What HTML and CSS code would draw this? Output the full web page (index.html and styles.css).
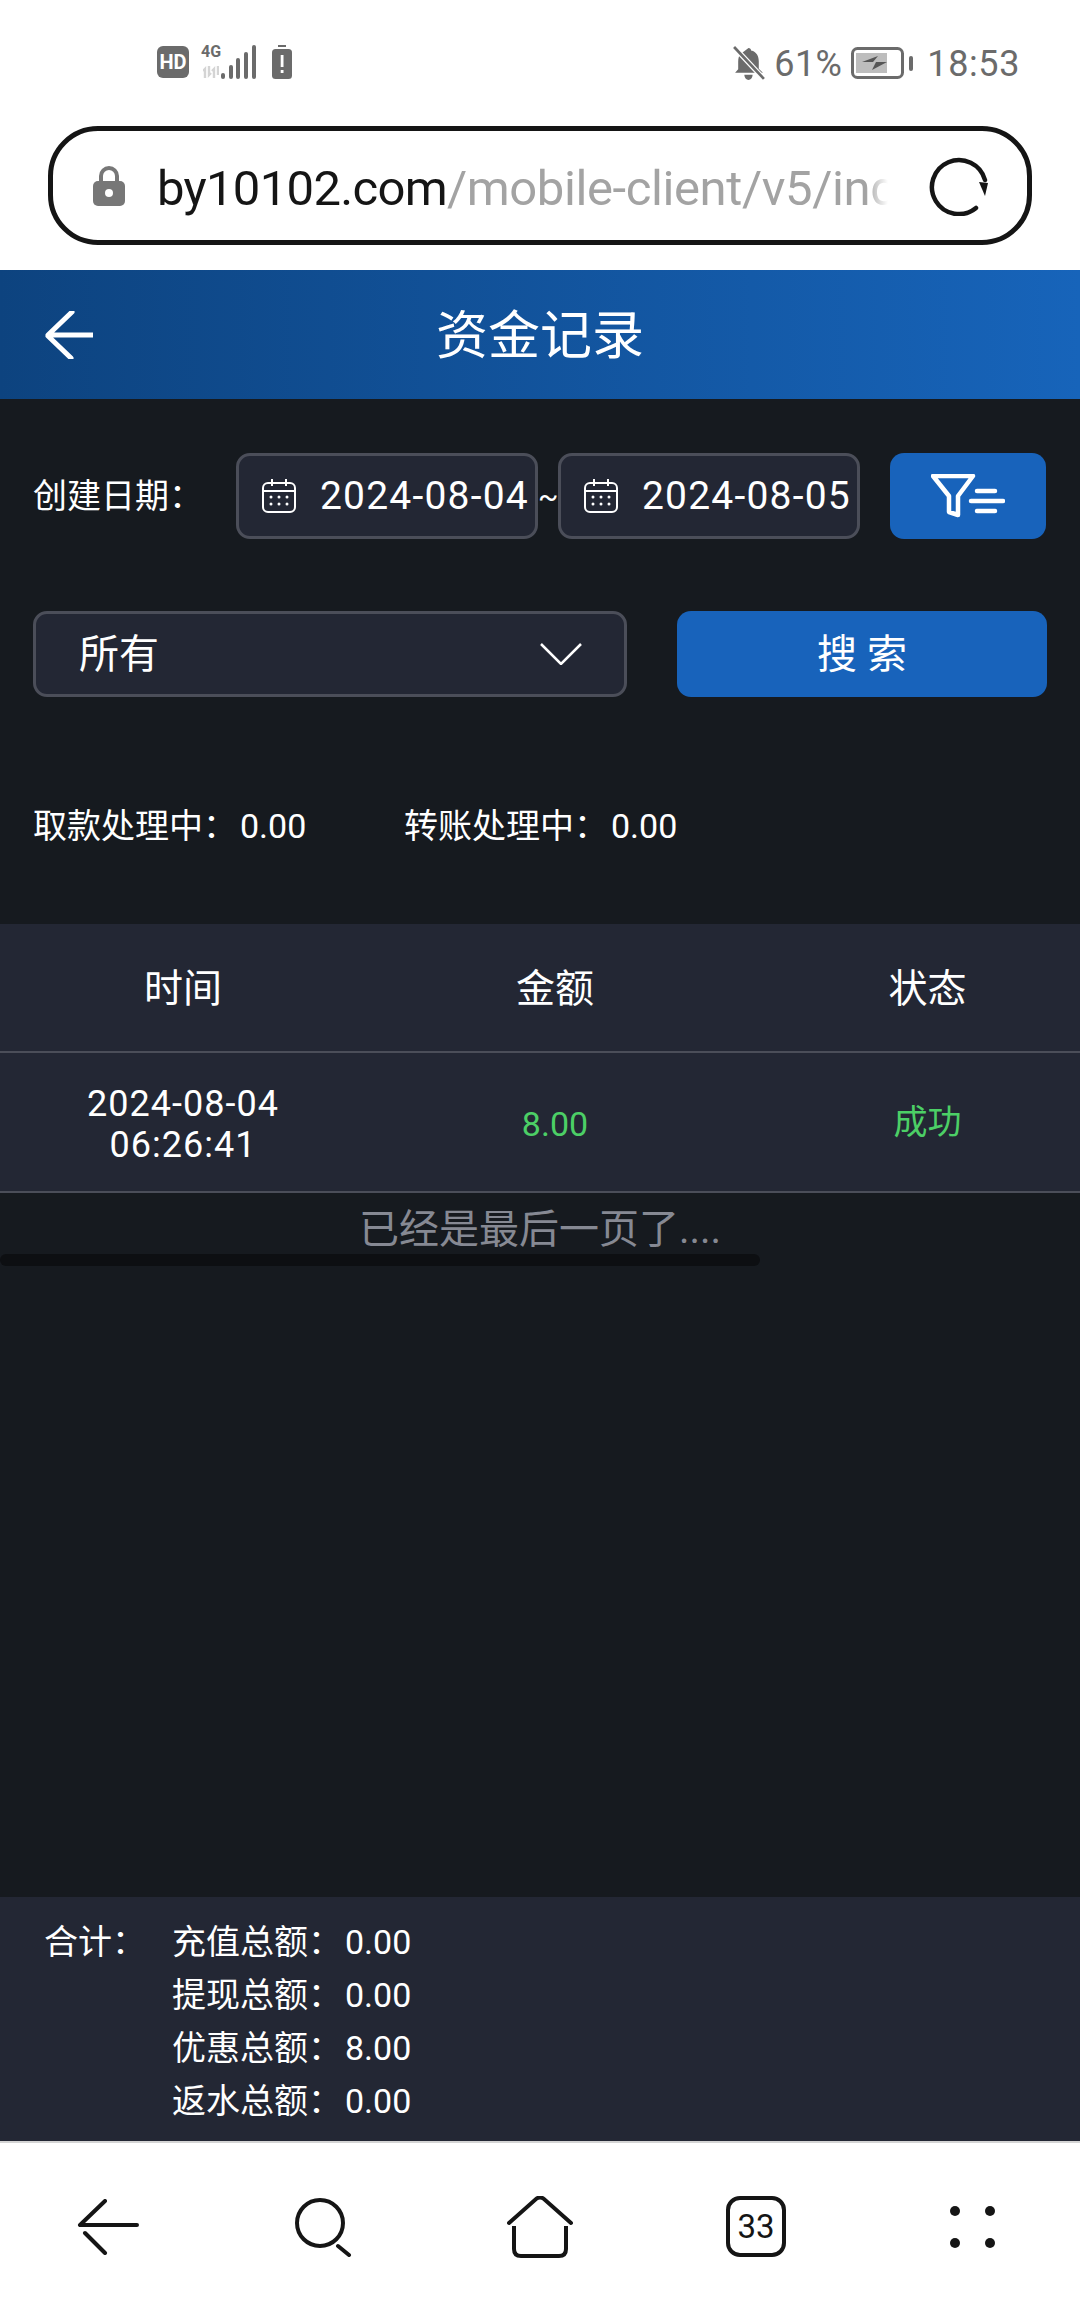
FILE: index.html
```html
<!DOCTYPE html>
<html lang="zh-CN">
<head>
    <meta charset="UTF-8">
    <meta name="viewport" content="width=device-width, initial-scale=1.0">
    <title>资金记录</title>
    <link rel="stylesheet" href="styles.css">
</head>
<body>
    <div class="status">
        <div class="status-left">
            <span class="hd">HD</span>
            <div class="net">
                <span class="net-label">4G</span>
                <svg class="net-arrows" width="16" height="12" viewBox="0 0 16 12"><path d="M2 12V3L0 5M6 0v9l2-2M11 12V3L9 5M15 0v9" fill="none" stroke="#d4d4d4" stroke-width="2.4"/></svg>
                <svg class="net-bars" width="35" height="34" viewBox="0 0 35 34"><g fill="#6b6b6b"><rect x="0" y="28" width="4" height="6" rx="2"/><rect x="8" y="20" width="4" height="14" rx="2"/><rect x="15" y="13" width="4" height="21" rx="2"/><rect x="23" y="7" width="4" height="27" rx="2"/><rect x="31" y="0" width="4" height="34" rx="2"/></g></svg>
            </div>
            <svg class="alert" width="20" height="34" viewBox="0 0 20 34"><rect x="6" y="0" width="8" height="2" fill="#6b6b6b"/><rect x="0" y="4" width="20" height="30" rx="3.500" fill="#6b6b6b"/><rect x="8.700" y="10" width="2.800" height="12" fill="#fff"/><rect x="8.700" y="25" width="2.800" height="3" fill="#fff"/></svg>
        </div>
        <div class="status-right">
            <svg width="32" height="35" viewBox="0 0 31 34"><path d="M15 2c1.500 0 2.500 1 2.500 2.300C23 5.500 25 10 25 15v7l4 4H2l3-3.500V15c0-3 .8-5.500 2-7z" fill="#6b6b6b"/><path d="M11 28h8c0 3-2 5-4 5s-4-2-4-5z" fill="#6b6b6b"/><path d="M1 1l29 31" stroke="#fff" stroke-width="5"/><path d="M1 1l29 31" stroke="#6b6b6b" stroke-width="2.600"/></svg>
            <span class="pct">61%</span>
            <svg width="62" height="32" viewBox="0 0 62 32"><rect x="1.500" y="1.500" width="50" height="29" rx="5" fill="none" stroke="#6b6b6b" stroke-width="3"/><rect x="5" y="6" width="31" height="20" fill="#bdbdbd"/><path d="M11 15l16-6-5 6h14l-15 8 4-8z" fill="#555"/><rect x="58" y="9" width="4" height="15" rx="2" fill="#6b6b6b"/></svg>
            <span class="clock">18:53</span>
        </div>
    </div>

    <div class="urlbar">
        <svg class="lock" width="32" height="40" viewBox="0 0 32 40"><path d="M8 16V10a8 8 0 0 1 16 0v6" fill="none" stroke="#777" stroke-width="4"/><rect x="0" y="15" width="32" height="25" rx="5" fill="#777"/><circle cx="16" cy="27" r="4" fill="#fff"/></svg>
        <div class="url"><span class="host">by10102.com</span>/mobile-client/v5/index.html</div>
        <svg class="reload" width="60" height="60" viewBox="0 0 60 60"><path d="M47 52A27 27 0 1 1 56 24" fill="none" stroke="#151515" stroke-width="4.500" stroke-linecap="round"/><path d="M50 26l9 1-3 13z" fill="#151515"/></svg>
    </div>

    <header class="topbar">
        <svg class="back" width="48" height="48" viewBox="0 0 48 48"><path d="M27 1L3 24h45M3 25l23 22" fill="none" stroke="#fff" stroke-width="5" stroke-linecap="round" stroke-linejoin="round"/></svg>
        <h1>资金记录</h1>
    </header>

    <main class="content">
        <div class="filters">
            <label class="date-label">创建日期：</label>
            <div class="date-box">
                <svg width="34" height="34" viewBox="0 0 34 34"><g fill="none" stroke="#fff" stroke-width="2"><rect x="1" y="4" width="32" height="29" rx="5"/><path d="M1 12h32M10 0v7M24 0v7"/></g><g fill="#fff"><circle cx="9" cy="18" r="1.500"/><circle cx="17" cy="18" r="1.500"/><circle cx="25" cy="18" r="1.500"/><circle cx="9" cy="25" r="1.500"/><circle cx="17" cy="25" r="1.500"/><circle cx="25" cy="25" r="1.500"/></g></svg>
                <span>2024-08-04</span>
            </div>
            <span class="tilde">~</span>
            <div class="date-box">
                <svg width="34" height="34" viewBox="0 0 34 34"><g fill="none" stroke="#fff" stroke-width="2"><rect x="1" y="4" width="32" height="29" rx="5"/><path d="M1 12h32M10 0v7M24 0v7"/></g><g fill="#fff"><circle cx="9" cy="18" r="1.500"/><circle cx="17" cy="18" r="1.500"/><circle cx="25" cy="18" r="1.500"/><circle cx="9" cy="25" r="1.500"/><circle cx="17" cy="25" r="1.500"/><circle cx="25" cy="25" r="1.500"/></g></svg>
                <span>2024-08-05</span>
            </div>
            <button class="btn btn-filter">
                <svg width="74" height="44" viewBox="0 0 74 44"><path d="M2 2h40L27 22v19l-9 -3V22z" fill="none" stroke="#fff" stroke-width="4.500" stroke-linejoin="round"/><path d="M46 17h18M40 27h32M46 37h18" stroke="#fff" stroke-width="4.500" stroke-linecap="round"/></svg>
            </button>
        </div>

        <div class="filters second">
            <div class="select">
                <span class="select-text">所有</span>
                <svg width="42" height="22" viewBox="0 0 42 22"><path d="M1 1l20 20L41 1" fill="none" stroke="#fff" stroke-width="2.500"/></svg>
            </div>
            <button class="btn btn-search">搜 索</button>
        </div>

        <div class="pending">
            <span class="pending-item">取款处理中：<b>0.00</b></span>
            <span class="pending-item">转账处理中：<b>0.00</b></span>
        </div>

        <div class="table">
            <div class="row head">
                <div>时间</div>
                <div>金额</div>
                <div>状态</div>
            </div>
            <div class="row">
                <div class="cell-time">2024-08-04<br>06:26:41</div>
                <div class="ok cell-num">8.00</div>
                <div class="ok cell-cjk">成功</div>
            </div>
        </div>

        <div class="pager">已经是最后一页了....</div>
        <div class="scroll-thumb"></div>
    </main>

    <footer class="totals">
        <span class="totals-title">合计：</span>
        <div class="totals-list">
            <div>充值总额：<b>0.00</b></div>
            <div>提现总额：<b>0.00</b></div>
            <div>优惠总额：<b>8.00</b></div>
            <div>返水总额：<b>0.00</b></div>
        </div>
    </footer>

    <nav class="bottom-nav">
        <div class="nav-item">
            <svg width="62" height="56" viewBox="0 0 62 56"><path d="M28 2L3 26h57" fill="none" stroke="#151515" stroke-width="4" stroke-linecap="round" stroke-linejoin="round"/><path d="M8 34l20 20" stroke="#151515" stroke-width="4" stroke-linecap="round"/></svg>
        </div>
        <div class="nav-item">
            <svg width="58" height="60" viewBox="0 0 58 60"><circle cx="25" cy="26" r="23" fill="none" stroke="#151515" stroke-width="4"/><path d="M43 49l11 9" stroke="#151515" stroke-width="4" stroke-linecap="round"/></svg>
        </div>
        <div class="nav-item">
            <svg width="66" height="62" viewBox="0 0 66 62"><path d="M2 27L29 3q4-3 8 0l27 24" fill="none" stroke="#151515" stroke-width="4" stroke-linecap="round"/><path d="M7 30v23q0 7 7 7h38q7 0 7-7V30" fill="none" stroke="#151515" stroke-width="4"/></svg>
        </div>
        <div class="nav-item"><span class="tabs">33</span></div>
        <div class="nav-item">
            <div class="dots"><i></i><i></i><i></i><i></i></div>
        </div>
    </nav>
</body>
</html>
```

FILE: styles.css
```css
* {
    box-sizing: border-box;
}
body {
    margin: 0;
    width: 1080px;
    height: 2310px;
    display: flex;
    flex-direction: column;
    overflow: hidden;
    background: #fff;
    font-family: Roboto, "Noto Sans CJK SC", sans-serif;
    color: #fff;
}

/* phone status bar */
.status {
    height: 126px;
    flex: none;
    display: flex;
    justify-content: space-between;
    align-items: flex-start;
    padding: 45px 60px 0 157px;
    color: #6b6b6b;
}
.status-left, .status-right {
    display: flex;
    align-items: center;
}
.status-left {
    gap: 12px;
}
.hd {
    width: 32px;
    height: 32px;
    background: #6b6b6b;
    border-radius: 6px;
    color: #fff;
    font-size: 20px;
    font-weight: 700;
    line-height: 32px;
    text-align: center;
}
.net {
    position: relative;
    width: 86px;
    height: 34px;
    margin-right: -27px;
}
.net-label {
    position: absolute;
    left: 0;
    top: -3px;
    font-size: 16px;
    font-weight: 700;
    color: #6b6b6b;
}
.net-arrows {
    position: absolute;
    left: 2px;
    top: 21px;
}
.net-bars {
    position: absolute;
    left: 20px;
    top: 0;
}
.pct, .clock {
    font-size: 36px;
    line-height: 34px;
    padding-top: 2px;
}
.pct {
    margin: 0 9px 0 9px;
    letter-spacing: .4px;
}
.clock {
    margin-left: 14px;
    letter-spacing: .6px;
}

/* browser address bar */
.urlbar {
    flex: none;
    width: 984px;
    height: 119px;
    margin: 0 0 25px 48px;
    border: 5px solid #151515;
    border-radius: 50px;
    display: flex;
    align-items: center;
    padding-left: 40px;
}
.lock {
    flex: none;
}
.url {
    width: 731px;
    margin-left: 32px;
    padding-top: 5px;
    overflow: hidden;
    white-space: nowrap;
    font-size: 49px;
    letter-spacing: -.4px;
    color: #a3a3a3;
    -webkit-mask-image: linear-gradient(to right, #000 97%, transparent);
}
.host {
    color: #151515;
    letter-spacing: -.7px;
}
.reload {
    flex: none;
    margin-left: 41px;
}

/* page header */
.topbar {
    flex: none;
    height: 129px;
    position: relative;
    display: flex;
    align-items: center;
    justify-content: center;
    padding-bottom: 6px;
    background: linear-gradient(to right, #0d437f, #1764ba);
}
.topbar h1 {
    margin: 0;
    font-size: 52px;
    font-weight: 400;
}
.back {
    position: absolute;
    left: 45px;
    top: 41px;
}

.content {
    flex: 1;
    min-height: 0;
    background: #161a1f;
    padding-top: 54px;
    overflow: hidden;
}
.filters {
    display: flex;
    align-items: center;
    height: 86px;
    padding: 0 33px;
}
.filters.second {
    margin-top: 72px;
}
.date-label {
    width: 203px;
    font-size: 34px;
    padding-bottom: 6px;
}
.date-box {
    width: 302px;
    height: 86px;
    display: flex;
    align-items: center;
    gap: 24px;
    padding-left: 23px;
    background: #232734;
    border: 3px solid #4b4e59;
    border-radius: 14px;
    font-size: 39px;
    letter-spacing: 1.2px;
    white-space: nowrap;
}
.tilde {
    width: 20px;
    font-size: 30px;
    text-align: center;
}
.btn {
    border: none;
    border-radius: 14px;
    background: #1863bb;
    color: #fff;
    font-family: inherit;
    height: 86px;
    padding: 0;
    display: flex;
    align-items: center;
    justify-content: center;
}
.btn-filter {
    width: 156px;
    margin-left: 30px;
}
.select {
    width: 594px;
    height: 86px;
    display: flex;
    align-items: center;
    justify-content: space-between;
    padding: 0 42px 0 43px;
    background: #232734;
    border: 3px solid #4b4e59;
    border-radius: 14px;
    font-size: 40px;
}
.select-text {
    padding-bottom: 6px;
}
.btn-search {
    width: 370px;
    margin-left: 50px;
    padding-bottom: 6px;
    font-size: 40px;
}
.pending {
    margin-top: 101px;
    height: 50px;
    padding-left: 33px;
    display: flex;
    align-items: center;
    font-size: 34px;
}
.pending-item {
    width: 371px;
}
b {
    font-weight: 400;
    margin-left: 3px;
}

/* records table, a little wider than the screen */
.table {
    width: 1111px;
    margin-top: 76px;
    background: #232734;
}
.row {
    display: grid;
    grid-template-columns: 366px 378px 367px;
    align-items: center;
    text-align: center;
    height: 140px;
    border-bottom: 2px solid #4b4e59;
    font-size: 34px;
}
.row.head {
    height: 129px;
    padding-bottom: 6px;
    font-size: 39px;
}
.cell-time {
    padding-top: 5px;
    font-size: 36px;
    line-height: 41px;
    letter-spacing: 1px;
}
.cell-num {
    padding-top: 4px;
}
.cell-cjk {
    padding-bottom: 5px;
}
.ok {
    color: #4ccf66;
}
.pager {
    height: 61px;
    line-height: 74px;
    font-size: 40px;
    text-align: center;
    color: #868993;
}
.scroll-thumb {
    width: 760px;
    height: 12px;
    border-radius: 6px;
    background: #0d0f12;
}

/* totals strip */
.totals {
    flex: none;
    height: 246px;
    padding: 19px 0 0 44px;
    display: flex;
    background: #232734;
    border-bottom: 2px solid #d4d4d4;
    font-size: 34px;
    line-height: 53px;
}
.totals-title {
    width: 128px;
}

/* browser toolbar */
.bottom-nav {
    flex: none;
    height: 167px;
    display: grid;
    grid-template-columns: repeat(5, 216px);
}
.nav-item {
    display: flex;
    align-items: center;
    justify-content: center;
}
.tabs {
    width: 60px;
    height: 61px;
    border: 4px solid #151515;
    border-radius: 14px;
    color: #151515;
    font-size: 33px;
    line-height: 53px;
    text-align: center;
}
.dots {
    display: grid;
    grid-template-columns: 10px 10px;
    column-gap: 25px;
    row-gap: 22px;
}
.dots i {
    width: 10px;
    height: 10px;
    border-radius: 50%;
    background: #151515;
}
```
